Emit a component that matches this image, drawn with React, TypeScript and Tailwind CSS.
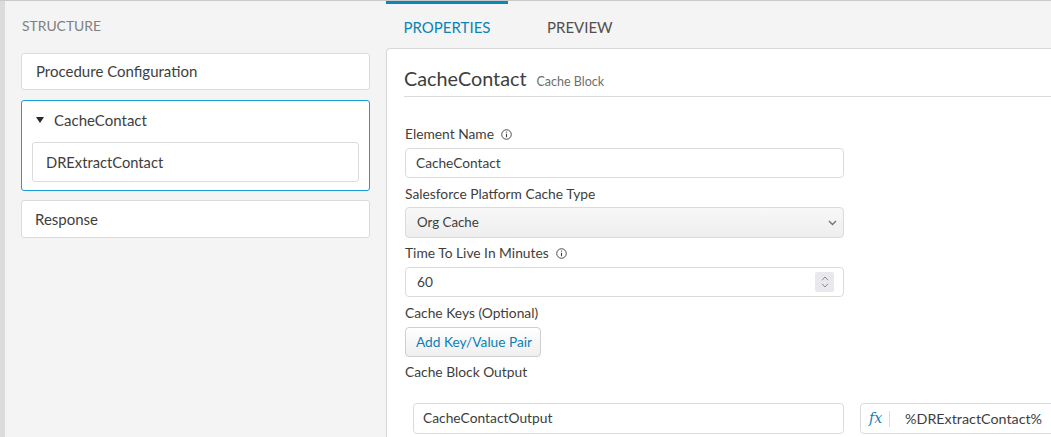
import React from "react";

const font = { fontFamily: "Lato, 'Open Sans', sans-serif" };

function InfoIcon() {
  return (
    <svg width="11" height="11" viewBox="0 0 12 12" className="ml-[7px] shrink-0">
      <circle cx="6" cy="6" r="5.2" fill="none" stroke="#3e3e3c" strokeWidth="1" />
      <line x1="6" y1="5.2" x2="6" y2="9" stroke="#3e3e3c" strokeWidth="1.2" />
      <circle cx="6" cy="3.4" r="0.75" fill="#3e3e3c" />
    </svg>
  );
}

function Label({ children, info }: { children: React.ReactNode; info?: boolean }) {
  return (
    <div className="h-[18px] pt-[2px] flex items-center text-[13.8px] text-[#3e3e3c] leading-[16px]">
      {children}
      {info && <InfoIcon />}
    </div>
  );
}

export default function App() {
  return (
    <div
      className="w-[1051px] h-[437px] overflow-hidden flex bg-[#f4f4f4] border-t border-[#c9c9c9]"
      style={font}
    >
      <div className="w-[5px] shrink-0 bg-[#dcdcdc]" />
      {/* Left panel */}
      <div className="w-[381px] shrink-0 px-[16px] pt-[16px]">
        <div className="pl-[1px] h-[18px] pt-[1px] flex items-center text-[13.9px] text-[#80807f]">
          STRUCTURE
        </div>
        <div className="mt-[18px] flex flex-col">
          <div className="h-[37px] bg-white border border-[#dddbda] rounded-[3px] flex items-center pl-[14px] text-[15px] text-[#3e3e3c]">
            Procedure Configuration
          </div>
          <div className="mt-[10px] h-[91px] bg-white border border-[#1b9bd8] rounded-[3px] flex flex-col px-[10px]">
            <div className="h-[38px] flex items-center pl-[4px] text-[15px] text-[#3e3e3c]">
              <svg width="8" height="6" viewBox="0 0 8 6" className="mr-[10px]">
                <polygon points="0,0 8,0 4,6" fill="#2b2826" />
              </svg>
              CacheContact
            </div>
            <div className="mt-[3px] h-[40px] border border-[#dddbda] rounded-[3px] flex items-center pl-[13px] text-[14.7px] text-[#3e3e3c]">
              DRExtractContact
            </div>
          </div>
          <div className="mt-[9px] h-[38px] bg-white border border-[#dddbda] rounded-[3px] flex items-center pl-[13px] text-[15px] text-[#3e3e3c]">
            Response
          </div>
        </div>
      </div>
      {/* Right panel */}
      <div className="flex-1 flex flex-col min-w-0">
        <div className="h-[47px] flex items-start shrink-0">
          <div className="w-[122px] h-[48px] -mt-[1px] border-t-[4px] border-[#0c87b8] pt-[13px] text-center text-[15px] leading-[20px] text-[#0a84b5]">
            PROPERTIES
          </div>
          <div className="ml-[22px] px-[17px] pt-[16px] text-[15px] leading-[20px] text-[#514f4d]">
            PREVIEW
          </div>
        </div>
        <div className="flex-1 bg-white border-l border-t border-[#d8d8d8] rounded-tl-[4px] pl-[17px] overflow-hidden">
          <div className="w-[900px]">
            <div className="pt-[17px] pb-[7px] border-b border-[#dddbda] flex items-baseline h-[48px]">
              <span className="text-[19.8px] leading-[24px] text-[#3e3e3c]">CacheContact</span>
              <span className="ml-[10px] text-[12.5px] text-[#706e6b]">Cache Block</span>
            </div>
            <div className="pt-[27px] pl-[1px] flex flex-col">
              <Label info>Element Name</Label>
              <div className="mt-[6px] w-[439px] h-[30px] border border-[#dddbda] rounded-[4px] flex items-center pl-[10px] text-[13.7px] text-[#3e3e3c]">
                CacheContact
              </div>
              <div className="mt-[6px]">
                <Label>Salesforce Platform Cache Type</Label>
              </div>
              <div className="mt-[5px] w-[439px] h-[31px] border border-[#dddbda] rounded-[4px] flex items-center justify-between pl-[11px] pr-[6px] text-[13.3px] text-[#3e3e3c] bg-gradient-to-b from-[#f8f8f8] to-[#eeeeee]">
                <span>Org Cache</span>
                <svg width="9" height="6" viewBox="0 0 9 6">
                  <polyline points="1,1 4.5,4.5 8,1" fill="none" stroke="#706e6b" strokeWidth="1.3" />
                </svg>
              </div>
              <div className="mt-[5px]">
                <Label info>Time To Live In Minutes</Label>
              </div>
              <div className="mt-[6px] w-[439px] h-[30px] border border-[#dddbda] rounded-[4px] flex items-center justify-between pl-[11px] pr-[9px] text-[13.7px] text-[#3e3e3c]">
                <span>60</span>
                <div className="w-[19px] h-[20px] bg-[#e9e9ed] rounded-[2px] flex flex-col items-center justify-center gap-[2px]">
                  <svg width="8" height="5" viewBox="0 0 8 5">
                    <polyline points="1,4.2 4,1 7,4.2" fill="none" stroke="#8a8a90" strokeWidth="1" />
                  </svg>
                  <svg width="8" height="5" viewBox="0 0 8 5">
                    <polyline points="1,0.8 4,4 7,0.8" fill="none" stroke="#8a8a90" strokeWidth="1" />
                  </svg>
                </div>
              </div>
              <div className="mt-[6px]">
                <Label>Cache Keys (Optional)</Label>
              </div>
              <div className="mt-[6px] w-[136px] h-[30px] border border-[#cfcfcf] rounded-[4px] flex items-center pl-[10px] text-[13.7px] text-[#0b7fb5] bg-gradient-to-b from-[#ffffff] to-[#efefef]">
                Add Key/Value Pair
              </div>
              <div className="mt-[5px]">
                <Label>Cache Block Output</Label>
              </div>
              <div className="mt-[23px] flex items-center">
                <div className="ml-[8px] w-[431px] h-[31px] border border-[#dddbda] rounded-[4px] flex items-center pl-[9px] text-[13.8px] text-[#3e3e3c]">
                  CacheContactOutput
                </div>
                <div className="ml-[16px] w-[260px] h-[31px] border border-[#dddbda] rounded-[4px] flex items-center pl-[8px] text-[14.3px] text-[#3e3e3c]">
                  <span className="italic text-[#0b7fb5] text-[14px] pr-[7px]" style={{ fontFamily: "'DejaVu Serif', serif" }}>
                    fx
                  </span>
                  <span className="w-px h-[16px] bg-[#dddbda]" />
                  <span className="ml-[15px]">%DRExtractContact%</span>
                </div>
              </div>
            </div>
          </div>
        </div>
      </div>
    </div>
  );
}
